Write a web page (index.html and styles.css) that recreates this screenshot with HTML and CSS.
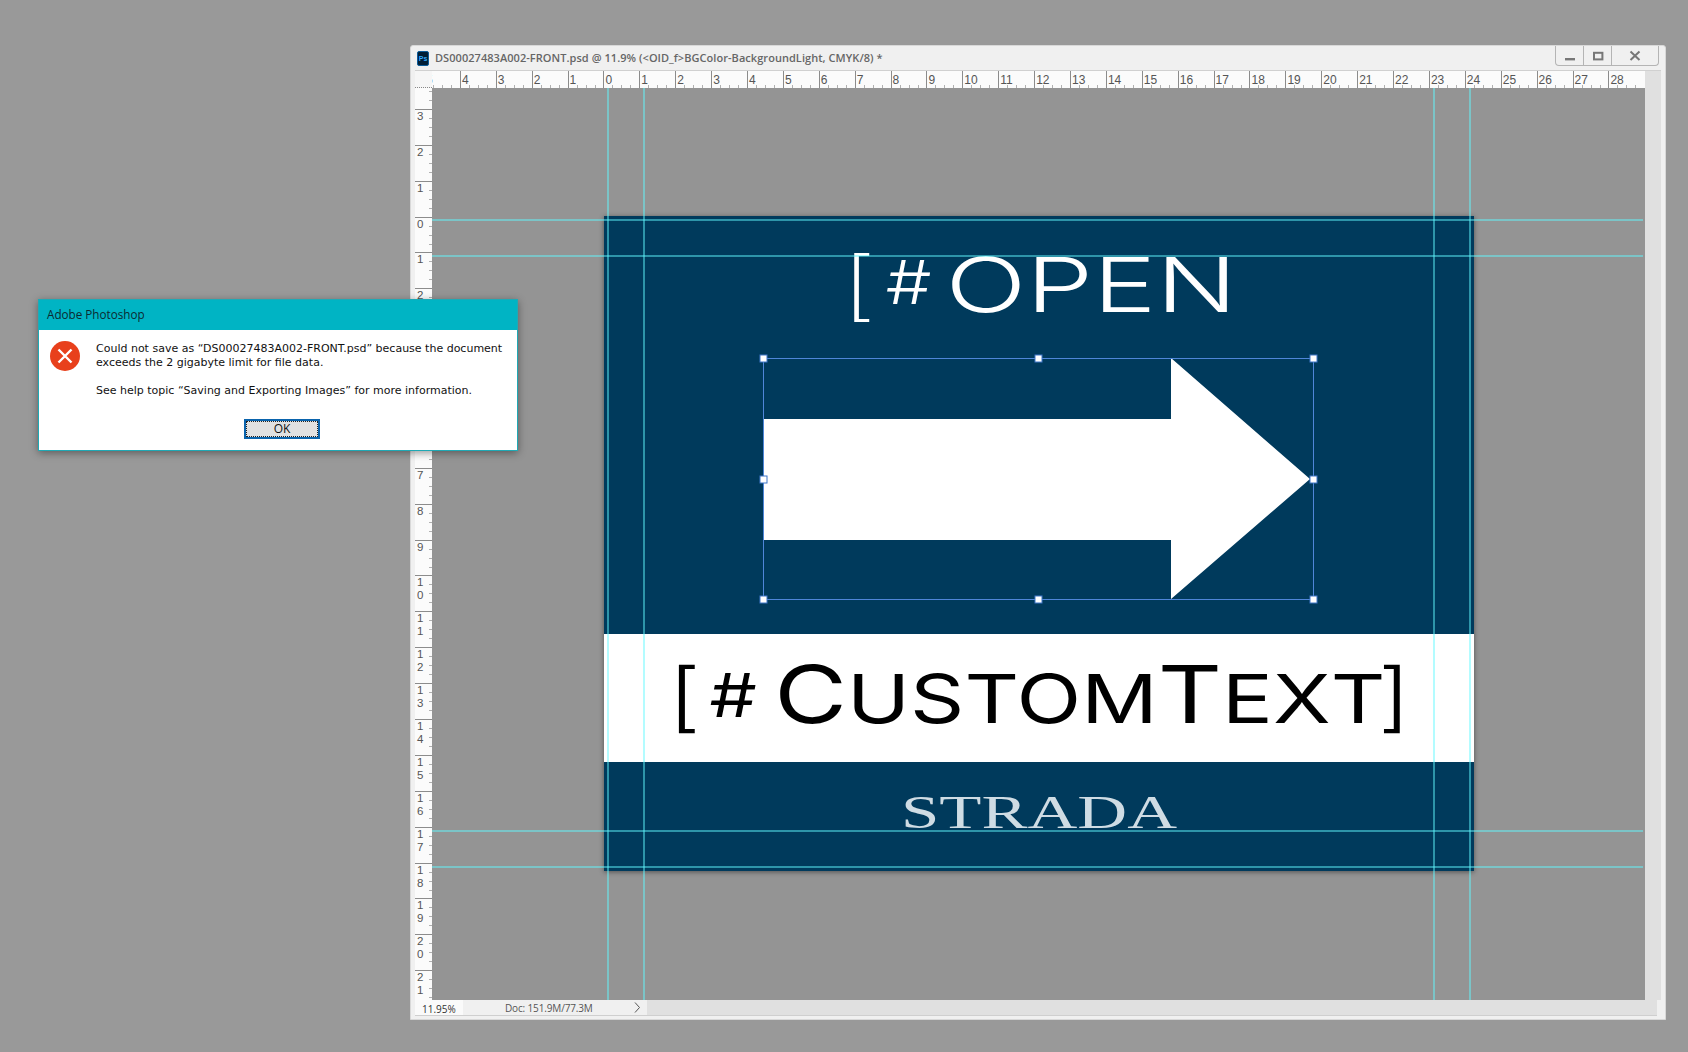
FILE: index.html
```html
<!DOCTYPE html>
<html lang="en">
<head>
    <meta charset="UTF-8">
    <title>Adobe Photoshop</title>
    <link rel="stylesheet" href="styles.css">
</head>
<body>
    <div class="window">
        <div class="titlebar">
            <span class="ps-icon">Ps</span>
            <span class="doc-title">DS00027483A002-FRONT.psd @ 11.9% (&lt;OID_f&gt;BGColor-BackgroundLight, CMYK/8) *</span>
            <div class="win-buttons">
                <span class="win-btn"><svg width="12" height="12" viewBox="0 0 12 12"><rect x="1" y="8" width="10" height="2.4" fill="#777"/></svg></span>
                <span class="win-btn"><svg width="12" height="12" viewBox="0 0 12 12"><rect x="2" y="2.8" width="8.4" height="6.6" fill="none" stroke="#777" stroke-width="2"/></svg></span>
                <span class="win-btn win-btn-close"><svg width="12" height="12" viewBox="0 0 12 12"><path d="M1.5 1.5L10.5 10 M10.5 1.5L1.5 10" fill="none" stroke="#777" stroke-width="2"/></svg></span>
            </div>
        </div>

        <div class="workarea">
            <div class="ruler-corner"></div>
            <div class="ruler-h">
                <span class="hmark">5</span><span class="hmark">4</span><span class="hmark">3</span><span class="hmark">2</span><span class="hmark">1</span><span class="hmark">0</span><span class="hmark">1</span><span class="hmark">2</span><span class="hmark">3</span><span class="hmark">4</span><span class="hmark">5</span><span class="hmark">6</span><span class="hmark">7</span><span class="hmark">8</span><span class="hmark">9</span><span class="hmark">10</span><span class="hmark">11</span><span class="hmark">12</span><span class="hmark">13</span><span class="hmark">14</span><span class="hmark">15</span><span class="hmark">16</span><span class="hmark">17</span><span class="hmark">18</span><span class="hmark">19</span><span class="hmark">20</span><span class="hmark">21</span><span class="hmark">22</span><span class="hmark">23</span><span class="hmark">24</span><span class="hmark">25</span><span class="hmark">26</span><span class="hmark">27</span><span class="hmark">28</span>
            </div>
            <div class="ruler-v">
                <span class="vmark"></span><span class="vmark">3</span><span class="vmark">2</span><span class="vmark">1</span><span class="vmark">0</span><span class="vmark">1</span><span class="vmark">2</span><span class="vmark">3</span><span class="vmark">4</span><span class="vmark">5</span><span class="vmark">6</span><span class="vmark">7</span><span class="vmark">8</span><span class="vmark">9</span><span class="vmark">1<br>0</span><span class="vmark">1<br>1</span><span class="vmark">1<br>2</span><span class="vmark">1<br>3</span><span class="vmark">1<br>4</span><span class="vmark">1<br>5</span><span class="vmark">1<br>6</span><span class="vmark">1<br>7</span><span class="vmark">1<br>8</span><span class="vmark">1<br>9</span><span class="vmark">2<br>0</span><span class="vmark">2<br>1</span>
            </div>

            <div class="canvas">
                <div class="artboard">
                    <div class="art-top">
                        <div class="headline"><span class="headline-text"><span class="bracket">[</span><span class="hash">#</span><span class="open-word">OPEN</span></span></div>
                        <svg class="arrow" width="551" height="242" viewBox="0 0 551 242">
                            <polygon points="0,61 408,61 408,0 547,121 408,241 408,182 0,182" fill="#fff"/>
                            <rect x="0.5" y="0.5" width="550" height="241" fill="none" stroke="#4f86d8"/>
                            <g fill="#fff" stroke="#3f76c8">
                                <rect x="-3" y="-3" width="7" height="7"/>
                                <rect x="272" y="-3" width="7" height="7"/>
                                <rect x="547" y="-3" width="7" height="7"/>
                                <rect x="-3" y="118" width="7" height="7"/>
                                <rect x="547" y="118" width="7" height="7"/>
                                <rect x="-3" y="238" width="7" height="7"/>
                                <rect x="272" y="238" width="7" height="7"/>
                                <rect x="547" y="238" width="7" height="7"/>
                            </g>
                        </svg>
                    </div>
                    <div class="art-band">
                        <span class="custom-text"><span class="thin">[</span><span class="band-hash">#</span><span class="big-cap">C</span><span class="small-caps">ustom</span><span class="big-cap">T</span><span class="small-caps">ex<span class="tight">t</span></span><span class="thin">]</span></span>
                    </div>
                    <div class="art-foot">
                        <span class="strada">STRADA</span>
                    </div>
                </div>
                <i class="guide guide-v g1"></i>
                <i class="guide guide-v g2"></i>
                <i class="guide guide-v g3"></i>
                <i class="guide guide-v g4"></i>
                <i class="guide guide-h g5"></i>
                <i class="guide guide-h g6"></i>
                <i class="guide guide-h g7"></i>
                <i class="guide guide-h g8"></i>
            </div>
            <div class="scrollbar"></div>
        </div>

        <div class="statusbar">
            <span class="zoom-box">11.95%</span>
            <span class="doc-info">Doc: 151.9M/77.3M
                <svg width="7" height="11" viewBox="0 0 7 11"><path d="M1 0.5L5.5 5.5L1 10.5" fill="none" stroke="#555"/></svg>
            </span>
        </div>
    </div>

    <div class="dialog">
        <div class="dialog-title">Adobe Photoshop</div>
        <div class="dialog-body">
            <svg class="error-icon" width="30" height="30" viewBox="0 0 30 30">
                <circle cx="15" cy="15" r="15" fill="#e8401c"/>
                <path d="M8.5 8.5L21.5 21.5 M21.5 8.5L8.5 21.5" stroke="#fff" stroke-width="2.4" fill="none"/>
            </svg>
            <div class="dialog-text">
                <p>Could not save as “DS00027483A002-FRONT.psd” because the document<br>exceeds the 2 gigabyte limit for file data.</p>
                <p>See help topic “Saving and Exporting Images” for more information.</p>
            </div>
        </div>
        <div class="dialog-actions">
            <button class="ok-btn" type="button"><span>OK</span></button>
        </div>
    </div>
</body>
</html>
```

FILE: styles.css
```css
* {
    box-sizing: border-box;
}
body {
    margin: 0;
    width: 1688px;
    height: 1052px;
    overflow: hidden;
    position: relative;
    background: #999999;
    font-family: "DejaVu Sans", sans-serif;
}

/* document window */
.window {
    position: absolute;
    left: 410px;
    top: 45px;
    width: 1256px;
    height: 975px;
    background: #f0f0f0;
    border: 1px solid #d8d8d8;
    border-radius: 3px 3px 0 0;
    padding: 0 4px 3px 4px;
    display: flex;
    flex-direction: column;
}
.titlebar {
    height: 24px;
    display: flex;
    align-items: center;
    flex-shrink: 0;
}
.ps-icon {
    width: 12px;
    height: 15px;
    margin: 1px 6px 0 2px;
    background: #001e36;
    border: 1px solid #0b5c9a;
    border-radius: 2px;
    color: #31a8ff;
    font: bold 7px/13px "Liberation Sans", sans-serif;
    text-align: center;
}
.doc-title {
    font: 600 11px "Open Sans", sans-serif;
    letter-spacing: 0.05px;
    color: #666;
    white-space: nowrap;
    margin-top: -2px;
}
.win-buttons {
    margin-left: auto;
    margin-right: 2px;
    align-self: flex-start;
    display: flex;
    height: 20px;
    border: 1px solid #b4b4b4;
    border-top: none;
    border-radius: 0 0 4px 4px;
}
.win-btn {
    width: 28px;
    display: flex;
    align-items: center;
    justify-content: center;
    border-right: 1px solid #b4b4b4;
}
.win-btn-close {
    width: 46px;
    border-right: none;
}

.workarea {
    flex: 1;
    min-height: 0;
    display: grid;
    grid-template-columns: 17px 1213px 20px;
    grid-template-rows: 18px 1fr;
}
.ruler-corner {
    background: #f6f6f6;
    border-bottom: 1px dotted #888;
    border-top: 1px solid #d0d0d0;
}
.ruler-h {
    background: #fbfbfb;
    border-top: 1px solid #d0d0d0;
    display: flex;
    overflow: hidden;
    grid-column: 2 / 3;
}
.hmark {
    flex: 0 0 35.9px;
    height: 17px;
    border-left: 1px solid #8c8c8c;
    padding-left: 1px;
    font: 12px/19px "Liberation Sans", sans-serif;
    color: #555;
    background: repeating-linear-gradient(90deg, transparent 0 7.975px, #b0b0b0 7.975px 8.975px) bottom left / 100% 3px no-repeat;
}
.hmark:first-child {
    margin-left: -8px;
}
.ruler-v {
    background: #fbfbfb;
    display: flex;
    flex-direction: column;
    overflow: hidden;
    grid-row: 2;
}
.vmark {
    flex: 0 0 35.9px;
    width: 17px;
    border-top: 1px solid #8c8c8c;
    padding-left: 2px;
    font: 11.5px/13px "Liberation Sans", sans-serif;
    color: #555;
    background: repeating-linear-gradient(180deg, transparent 0 7.975px, #b0b0b0 7.975px 8.975px) top right / 3px 100% no-repeat;
}
.vmark:first-child {
    margin-top: -15px;
}

/* canvas */
.canvas {
    position: relative;
    overflow: hidden;
    background: #949494;
    grid-row: 2;
    grid-column: 2;
}
.scrollbar {
    background: #e0e0e0;
    grid-column: 3;
    grid-row: 1 / 3;
    margin-right: 4px;
    border-top: 1px solid #d0d0d0;
}
.artboard {
    position: absolute;
    left: 172px;
    top: 128px;
    width: 870px;
    height: 655px;
    background: #003a5c;
    box-shadow: 0 1px 5px rgba(0, 0, 0, 0.45);
    display: flex;
    flex-direction: column;
}
.art-top {
    height: 418px;
}
.headline {
    height: 142px;
    padding-top: 21px;
    display: flex;
    justify-content: center;
    color: #fff;
    font: 300 76px/90px Inter, sans-serif;
    white-space: nowrap;
}
.headline-text {
    display: inline-block;
    transform: scaleX(1.4);
}
.bracket {
    font-weight: 200;
}
.hash {
    font-size: 60px;
    margin: 0 7px 0 4px;
    display: inline-block;
    vertical-align: 8px;
    transform: scaleX(0.86);
}
.arrow {
    display: block;
    margin-left: 159px;
    overflow: visible;
}
.art-band {
    height: 128px;
    background: #fff;
    display: flex;
    justify-content: center;
    color: #000;
    font: 400 76px/120px Inter, sans-serif;
    white-space: nowrap;
}
.custom-text {
    display: inline-block;
    transform: scaleX(1.245);
}
.band-hash {
    font-size: 60px;
    margin: 0 14px 0 7px;
    display: inline-block;
    vertical-align: 6px;
}
.big-cap {
    font-size: 80px;
}
.small-caps {
    font-size: 68px;
    text-transform: uppercase;
}
.tight {
    letter-spacing: -6px;
}
.thin {
    font-weight: 300;
}
.art-foot {
    flex: 1;
    display: flex;
    justify-content: center;
    padding-top: 21px;
}
.strada {
    font: 46px/60px "Liberation Serif", serif;
    color: #cfdce4;
    height: 60px;
    display: inline-block;
    transform: scaleX(1.5);
}

/* guides */
.guide {
    position: absolute;
    background: rgba(96, 248, 255, 0.48);
}
.guide-v {
    top: 0;
    bottom: 0;
    width: 2px;
}
.guide-h {
    left: 0;
    right: 2px;
    height: 2px;
}
.g1 { left: 175px; }
.g2 { left: 211px; }
.g3 { left: 1001px; }
.g4 { left: 1037px; }
.g5 { top: 131px; }
.g6 { top: 167px; }
.g7 { top: 742px; }
.g8 { top: 778px; }

.statusbar {
    height: 16px;
    flex-shrink: 0;
    background: #e0e0e0;
    border-bottom: 1px solid #cfcfcf;
    margin-right: 4px;
    display: flex;
    font: 10px/18px "Open Sans", sans-serif;
    color: #555;
}
.zoom-box {
    width: 48px;
    background: #fafafa;
    padding-left: 7px;
    color: #333;
}
.doc-info {
    width: 184px;
    background: #f0f0f0;
    padding: 0 6px 0 42px;
    letter-spacing: -0.15px;
    display: flex;
    align-items: center;
    justify-content: space-between;
}

/* error dialog */
.dialog {
    position: absolute;
    left: 38px;
    top: 299px;
    width: 480px;
    height: 152px;
    background: #fff;
    border: 1px solid #1fa9b5;
    box-shadow: 0 2px 8px rgba(0, 0, 0, 0.4);
}
.dialog-title {
    height: 30px;
    background: #00b4c4;
    color: #0c2a30;
    font: 11.7px/28px "Open Sans", sans-serif;
    padding-left: 8px;
}
.dialog-body {
    display: flex;
    padding: 11px 0 0 11px;
}
.error-icon {
    flex-shrink: 0;
}
.dialog-text {
    margin: 1px 0 0 16px;
    font: 11px/14px "DejaVu Sans", sans-serif;
    color: #111;
    white-space: nowrap;
}
.dialog-text p {
    margin: 0 0 14px;
}
.dialog-actions {
    display: flex;
    justify-content: center;
    padding-left: 8px;
    margin-top: 7px;
}
.ok-btn {
    width: 76px;
    height: 20px;
    padding: 1px;
    border: 2px solid #0a64ad;
    background: #e1e1e1;
    font: 12px "Open Sans", sans-serif;
    color: #111;
}
.ok-btn span {
    display: block;
    height: 100%;
    line-height: 13px;
    outline: 1px dotted #222;
}
```
